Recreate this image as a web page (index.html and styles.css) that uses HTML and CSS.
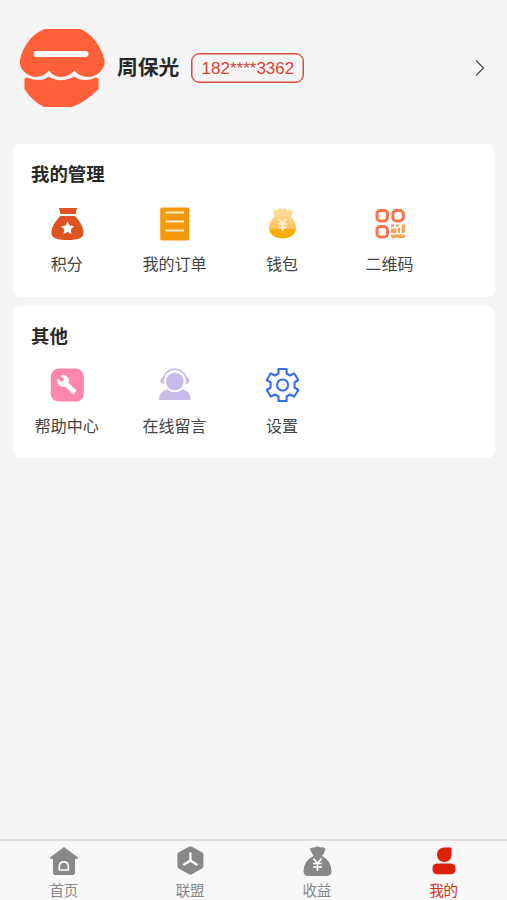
FILE: index.html
```html
<!DOCTYPE html>
<html lang="zh-CN">
<head>
<meta charset="utf-8">
<title>我的</title>
<link rel="stylesheet" href="styles.css">
</head>
<body>
<div class="page">
  <header class="profile">
    <svg class="avatar" viewBox="0 0 86 80">
      <path fill="#ff6039" d="M26 1H61C72 5 82 17 85.500 32V37Q83 43 77 47Q73 49 69 49Q60 49 55.500 42.500Q50 49 42 49Q34 49 30 42.500Q25 49 16 49Q12 49 8 46Q2 42 1 36V32C4 17 14 5 26 1Z"/>
      <path fill="#ff6039" d="M5.500 50.500L8 49.500Q21 55 30 48.500Q41 56 55 48.500Q64 55 77 49.500L79.500 50.500V61Q67 74 53 79H25Q13 73 5.500 61Z"/>
      <path d="M17.500 26H66.500" stroke="#fff7f3" stroke-width="6" stroke-linecap="round"/>
    </svg>
    <h1 class="name">周保光</h1>
    <span class="phone">182****3362</span>
    <svg class="chevron" viewBox="0 0 12 18"><path d="M2 1.500 9.500 9 2 16.500" fill="none" stroke="#555" stroke-width="1.400"/></svg>
  </header>

  <section class="card">
    <h2 class="title">我的管理</h2>
    <div class="grid">
      <div class="item">
        <svg class="icon" viewBox="0 0 36 36">
          <path fill="#de531f" d="M10 2H28L26.500 8H11.500ZM11.500 10H26C29.500 14 34.500 20 34.500 26.500C34.500 32 30.500 34 18.500 34S2.500 32 2.500 26.500C2.500 20 7.500 14 11.500 10Z"/>
          <path fill="#fff" d="m18.500 15.500 2 4.100 4.500.7-3.200 3.200.7 4.600-4-2.100-4 2.100.7-4.600-3.200-3.200 4.500-.7Z"/>
        </svg>
        <span>积分</span>
      </div>
      <div class="item">
        <svg class="icon" viewBox="0 0 36 36">
          <rect x="4.200" y="1.500" width="29" height="33" rx="2" fill="#f59a0b"/>
          <path d="M9.500 6.500H28M9.500 15.500H28M9.500 24.500H28" stroke="#fff0cb" stroke-width="2"/>
        </svg>
        <span>我的订单</span>
      </div>
      <div class="item">
        <svg class="icon" viewBox="0 0 36 36">
          <defs><linearGradient id="purse" x2="0" y2="1"><stop offset=".1" stop-color="#ffd083"/><stop offset=".56" stop-color="#ffc35a"/><stop offset=".58" stop-color="#ffad08"/></linearGradient></defs>
          <path fill="#ffd994" d="M11 12 9 6Q9.500 3 13.500 4Q15.500 1 18.500 3Q21.500 1 23.500 4Q28.500 3 28.500 6L26.500 12Z"/>
          <path fill="url(#purse)" d="M11.500 10H26C29 12 32 17 32 22C32 28 26.500 32.500 18.500 32.500S5 28 5 22C5 17 8 12 11.500 10Z"/>
          <path d="m14.500 13 4 4 4-4M18.500 17V25M14 18H23M14.500 21.500H22.500" fill="none" stroke="#fff6df" stroke-width="1.500"/>
        </svg>
        <span>钱包</span>
      </div>
      <div class="item">
        <svg class="icon" viewBox="0 0 36 36">
          <g fill="none" stroke="#f8754b" stroke-width="3"><rect x="5" y="4.500" width="10.500" height="10.500" rx="3.500"/><rect x="20.800" y="4.500" width="10.500" height="10.500" rx="3.500"/><rect x="5" y="20.500" width="10.500" height="10.500" rx="3.500"/></g>
          <path fill="#f9a354" d="M19 18.500H22V21H19ZM19 22.500H24.500V27H19ZM24 18.500H26.500V21H24ZM26 22H28V27H26ZM29.500 18.500H32.800V27H29.500ZM19 28.500H32.800V32H19Z"/>
        </svg>
        <span>二维码</span>
      </div>
    </div>
  </section>

  <section class="card">
    <h2 class="title">其他</h2>
    <div class="grid raised">
      <div class="item">
        <svg class="icon" viewBox="0 0 36 36">
          <rect x="1.800" y="1.500" width="33" height="33" rx="8" fill="#ff86ae"/>
          <path fill="#fff" d="M11.500 8.600Q16.500 6.500 19.300 11Q20.500 14 19.500 16L27.500 23.500L24.500 27.500L15.800 19.500Q11.500 20.500 9 16.500Q7.700 14 8.700 11.300L12.500 15L15.500 12.500Z"/>
        </svg>
        <span>帮助中心</span>
      </div>
      <div class="item">
        <svg class="icon" viewBox="0 0 36 36">
          <circle cx="18.800" cy="14.500" r="8.800" fill="#c8baea"/>
          <path d="M7.300 13C8.800 -1.500 28.800 -1.500 30.300 13" fill="none" stroke="#c8baea" stroke-width="1.600"/>
          <path fill="#c8baea" d="M8 10V17Q4.500 16.500 4.500 13.500Q4.500 10.500 8 10ZM29.800 10V17Q33.300 16.500 33.300 13.500Q33.300 10.500 29.800 10ZM3 33Q3 24 11 22.500Q18.800 28 26.500 22.500Q34.500 24 34.500 33Z"/>
        </svg>
        <span>在线留言</span>
      </div>
      <div class="item">
        <svg class="icon" viewBox="0 0 36 36">
          <g fill="none" stroke="#376fe8" stroke-width="2.100" stroke-linejoin="round"><path d="M14.500 2H22.600V6.500L26.100 8.500L30.100 6.300L34.300 13L30.500 15.500V20.500L34.300 23L30.100 29.700L26.100 27.500L22.600 29.500V34H14.500V29.500L10.800 27.500L6.800 29.700L2.800 23L6.600 20.500V15.500L2.800 13L6.800 6.300L10.800 8.500L14.500 6.500Z"/><circle cx="18.600" cy="18" r="5.500"/></g>
        </svg>
        <span>设置</span>
      </div>
    </div>
  </section>

  <nav class="tabs">
    <div class="tab">
      <svg class="tab-icon" viewBox="0 0 32 32"><path fill="#888" d="M17 2 31 12.500 30 14H28V28Q28 30 26 30H8Q6 30 6 28V14H4L3 12.500Z"/><path d="M12.300 25V21Q12.800 16.800 16.800 16.800T21.300 21V25Z" fill="none" stroke="#fff" stroke-width="1.700"/></svg>
      <span>首页</span>
    </div>
    <div class="tab">
      <svg class="tab-icon" viewBox="0 0 32 32"><path fill="#888" d="M14.900 1.700Q16.400 1 17.900 1.700L28.400 7.500Q29.400 8 29.400 9.500V21Q29.400 22.500 28.400 23.200L17.900 29.200Q16.400 30 14.900 29.200L4.400 23.200Q3.400 22.500 3.400 21V9.500Q3.400 8 4.400 7.500Z"/><path d="M16.400 7.500V15.500L9.400 20M16.400 15.500 23.400 20" fill="none" stroke="#fff" stroke-width="2.500"/></svg>
      <span>联盟</span>
    </div>
    <div class="tab">
      <svg class="tab-icon" viewBox="0 0 32 32"><path fill="#888" d="M12.500 11Q10 7 9 4Q9 2 13.500 2.500Q16.500 .3 19.500 2.500Q24 1.500 24.500 4Q23.500 8 21 11Q30.500 16 30.500 26Q30.500 31 25.500 31H7.500Q2.500 31 2.500 26Q2.500 16 12.500 11Z"/><path d="m12.500 13.500 4 5 4-5M16.500 18.500V26M12 18.500H21M12 22H21" fill="none" stroke="#fff" stroke-width="1.700"/></svg>
      <span>收益</span>
    </div>
    <div class="tab active">
      <svg class="tab-icon" viewBox="0 0 32 32"><path fill="#dc2108" d="M23.500 3V10Q23 17 16.500 17Q9.500 17 9 10Q9 3 16 2.500H22.500Z"/><rect x="4.500" y="18.500" width="23" height="10.800" rx="4.500" fill="#dc2108"/></svg>
      <span>我的</span>
    </div>
  </nav>
</div>
</body>
</html>
```

FILE: styles.css
```css
* { box-sizing: border-box; }
body {
  margin: 0;
  background: #f5f5f5;
  color: #282828;
  font-family: "Liberation Sans", "Noto Sans CJK SC", sans-serif;
}
.page {
  display: flex;
  flex-direction: column;
  height: 900px;
  overflow: hidden;
}
.profile {
  display: flex;
  align-items: center;
  height: 136px;
  margin-bottom: 8px;
  padding: 0 21px 0 19px;
}
.avatar { width: 86px; height: 80px; }
.name {
  margin: 0 0 0 12px;
  font-size: 20.8px;
  line-height: 30px;
  font-weight: 700;
}
.phone {
  width: 113px;
  height: 30px;
  margin-left: 12px;
  border: 1px solid #dd493b;
  border-radius: 8px;
  box-shadow: inset 0 0 0 .5px #dd493b;
  color: #d94335;
  font-size: 17px;
  line-height: 29px;
  text-align: center;
}
.chevron { width: 12px; height: 18px; margin: 0 0 1px auto; }
.card {
  height: 152.500px;
  margin: 0 12px 9px 13px;
  padding-top: 17px;
  border-radius: 8px;
  background: #fff;
}
.title {
  margin: 0 0 0 18px;
  font-size: 18.400px;
  line-height: 28px;
  font-weight: 700;
}
.grid {
  display: grid;
  grid-template-columns: repeat(4, 107.600px);
  margin-top: 17px;
}
.raised { margin-top: 16px; }
.item {
  display: flex;
  flex-direction: column;
  align-items: center;
  color: #444;
  font-size: 16px;
  line-height: 24px;
}
.icon { width: 36px; height: 36px; margin-bottom: 11px; }
.raised .icon { margin-bottom: 12px; }
.tabs {
  display: flex;
  height: 61.500px;
  margin-top: auto;
  padding-top: 4.500px;
  border-top: 2px solid #e0e0e0;
  background: #f8f8f8;
}
.tab {
  flex: 1;
  display: flex;
  flex-direction: column;
  align-items: center;
  color: #888;
  font-size: 14.500px;
  line-height: 22px;
}
.tab:first-child span { margin-left: 1px; }
.tab-icon { flex: none; width: 32px; height: 32px; margin-bottom: 2.500px; }
.active { color: #dc2d19; }
```
